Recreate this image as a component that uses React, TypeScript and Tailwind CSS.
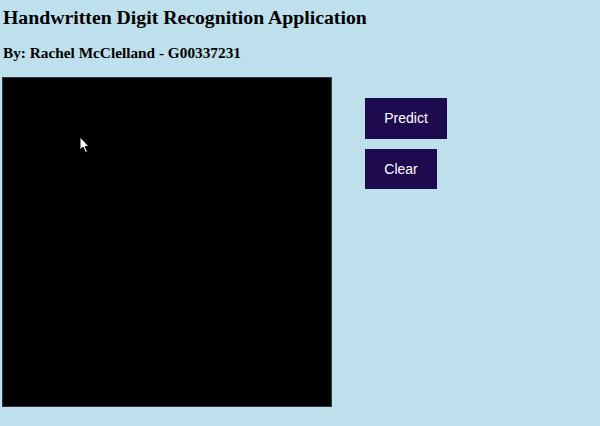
export default function App() {
  return (
    <div className="min-h-[426px] bg-[#bde0ec] text-black" style={{ fontFamily: '"Liberation Serif", serif' }}>
      <h1 className="pl-[3px] pt-[5px] text-[19.75px] font-bold leading-[24px]">
        Handwritten Digit Recognition Application
      </h1>
      <h3 className="pl-[3px] pt-[14px] text-[15.3px] font-bold leading-[20px]">
        By: Rachel McClelland - G00337231
      </h3>
      <div className="mt-[14px] flex items-start pl-[2px]">
        <div className="relative h-[330px] w-[330px] border border-[#2a3a40] bg-black">
          {/* mouse pointer */}
          <svg className="absolute left-[76px] top-[58px]" width="12" height="18" viewBox="0 0 12 18">
            <path d="M1 1 L1 14 L4 11 L6.5 16.5 L8.5 15.5 L6 10.5 L10 10.5 Z" fill="#fff" stroke="#000" strokeWidth="1" />
          </svg>
        </div>
        <div className="ml-[33px] mt-[21px] flex flex-col items-start gap-[10px]" style={{ fontFamily: '"Liberation Sans", sans-serif' }}>
          <button className="h-[41px] w-[82px] bg-[#1e0b4f] text-[14px] text-white">Predict</button>
          <button className="h-[40px] w-[72px] bg-[#1e0b4f] text-[14px] text-white">Clear</button>
        </div>
      </div>
    </div>
  );
}
